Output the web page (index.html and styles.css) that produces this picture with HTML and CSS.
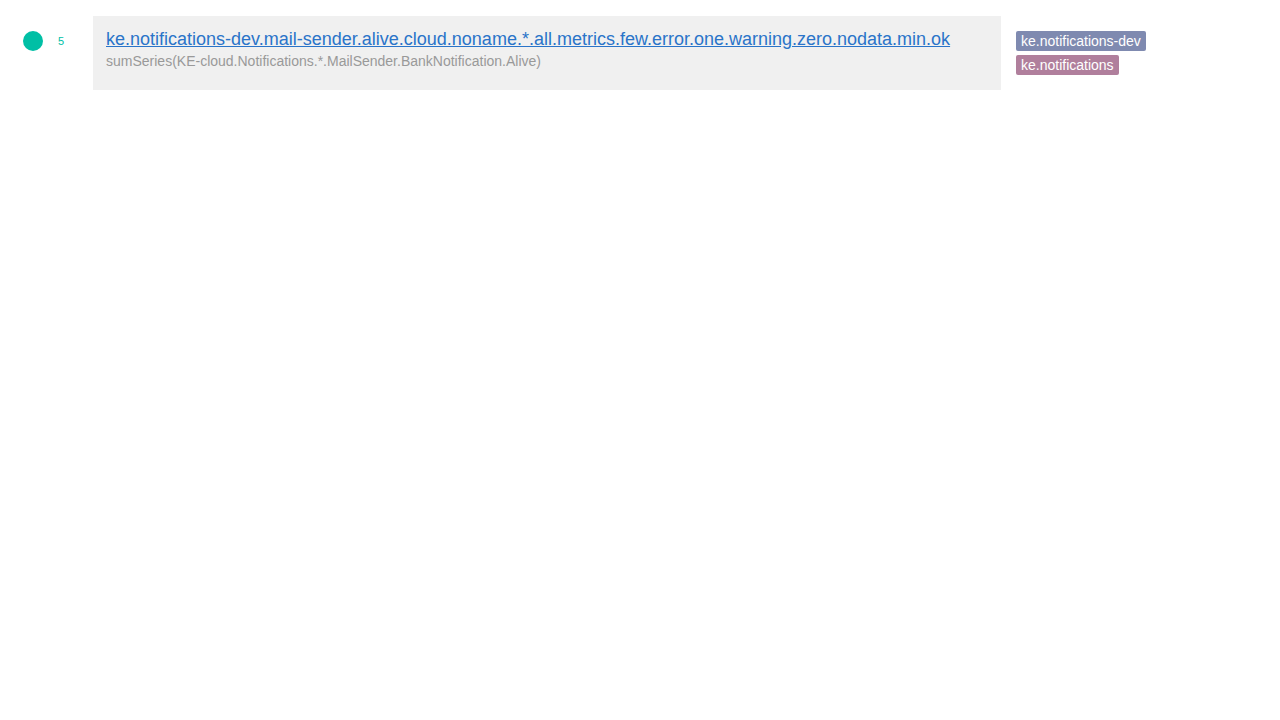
FILE: index.html
```html
<!DOCTYPE html>
<html>
<head>
<meta charset="utf-8">
<link rel="stylesheet" href="styles.css">
</head>
<body>
<div class="row">
  <div class="status"><span class="dot"></span></div>
  <div class="count">5</div>
  <div class="card">
    <a class="title" href="#">ke.notifications-dev.mail-sender.alive.cloud.noname.*.all.metrics.few.error.one.warning.zero.nodata.min.ok</a>
    <div class="target">sumSeries(KE-cloud.Notifications.*.MailSender.BankNotification.Alive)</div>
  </div>
  <div class="tags">
    <span class="tag tag-dev">ke.notifications-dev</span>
    <span class="tag tag-main">ke.notifications</span>
  </div>
</div>
</body>
</html>
```
FILE: styles.css
```css
html, body {
  margin: 0;
  padding: 0;
  background: #fff;
  font-family: "Liberation Sans", Arial, sans-serif;
}
.row {
  display: flex;
  align-items: flex-start;
  padding: 16px 0 0 23px;
}
.status {
  width: 20px;
  padding-top: 15px;
}
.dot {
  display: block;
  width: 20px;
  height: 20px;
  border-radius: 50%;
  background: #00bfa5;
}
.count {
  box-sizing: border-box;
  width: 50px;
  padding: 18px 0 0 15px;
  font-size: 11px;
  color: #00bfa5;
  line-height: 14px;
}
.card {
  width: 908px;
  height: 74px;
  box-sizing: border-box;
  background: #f0f0f0;
  padding: 12px 13px;
}
.title {
  display: block;
  font-size: 18px;
  line-height: 22px;
  color: #2a74c9;
  text-decoration: underline;
}
.target {
  font-size: 14px;
  line-height: 20px;
  color: #999;
  margin-top: 1px;
}
.tags {
  display: flex;
  flex-direction: column;
  align-items: flex-start;
  gap: 4px;
  padding: 15px 0 0 15px;
}
.tag {
  display: block;
  font-size: 14px;
  line-height: 20px;
  padding: 0 5px;
  border-radius: 2px;
  color: #fff;
}
.tag-dev { background: #7f8ab0; }
.tag-main { background: #b07f9c; }
```
